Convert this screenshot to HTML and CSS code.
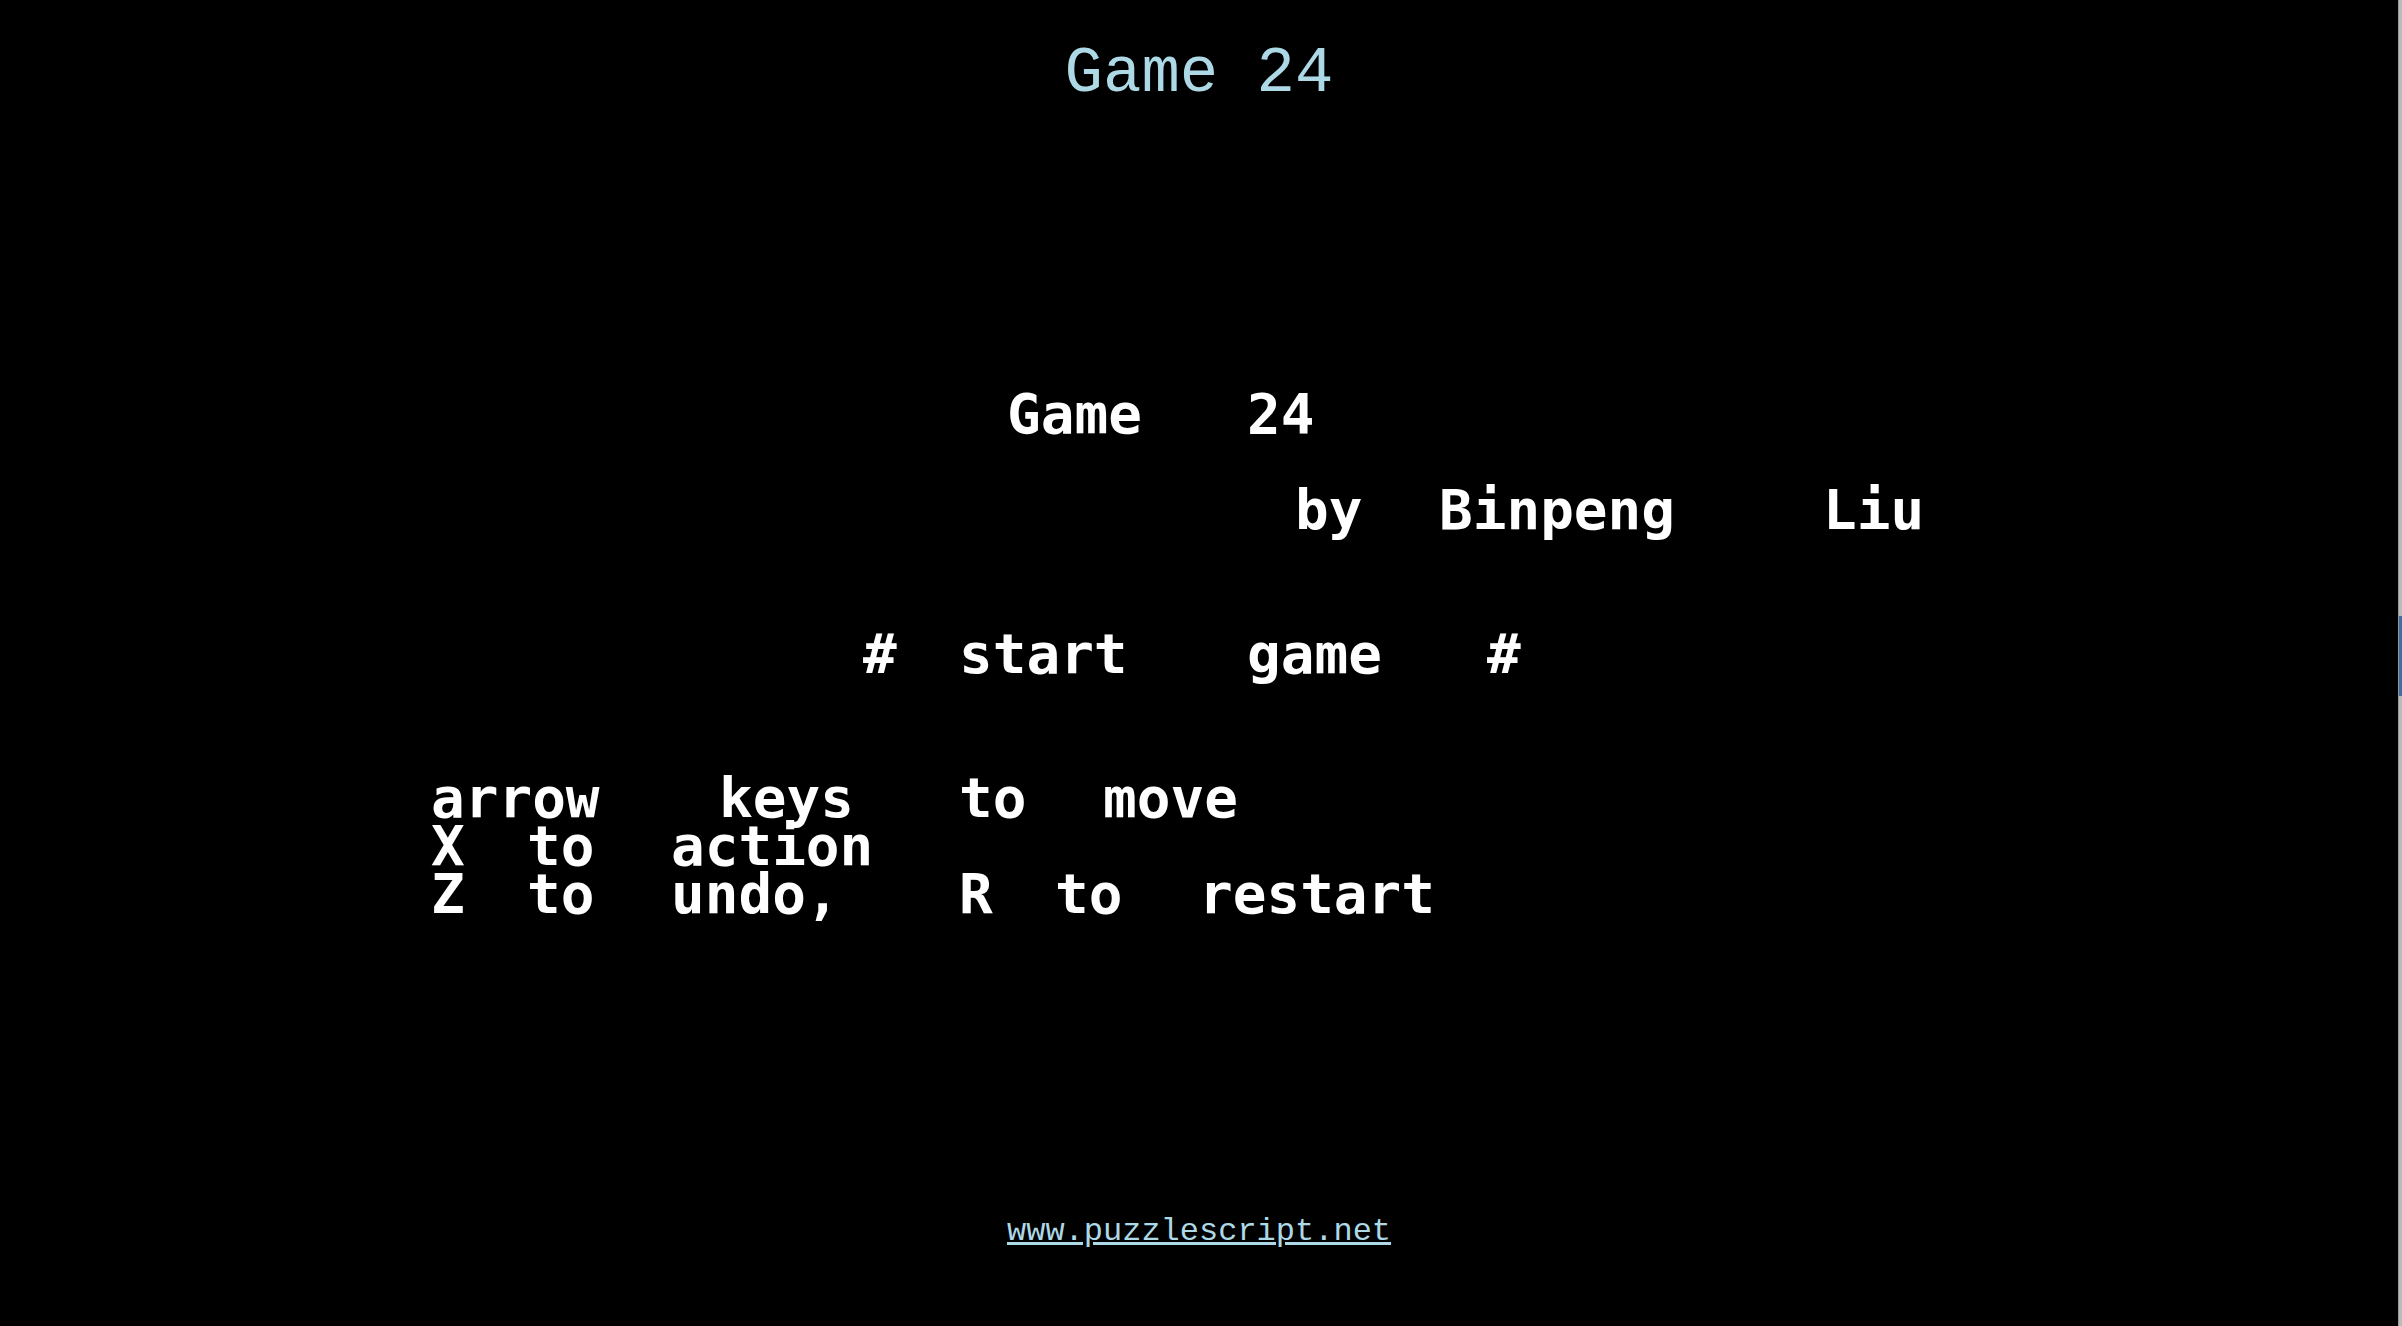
FILE: index.html
```html
<!DOCTYPE html>
<html lang="en">
<head>
<meta charset="utf-8">
<title>Game 24</title>
<link rel="stylesheet" href="styles.css">
</head>
<body>
<div class="page">
  <header class="header"><h1 class="title">Game 24</h1></header>
  <main class="screen">
    <div class="grid">
      <h2 class="line game-title"><span class="w4">Game</span> <span class="w2">24</span></h2>
      <p class="line author"><span class="w2">by</span> <span class="w7">Binpeng</span> <span class="w3">Liu</span></p>
      <button class="line start" type="button"><span class="w1">#</span> <span class="w5">start</span> <span class="w4">game</span> <span class="w1">#</span></button>
      <div class="keys">
        <p class="line"><span class="w5">arrow</span> <span class="w4">keys</span> <span class="w2">to</span> <span class="w4">move</span></p>
        <p class="line"><span class="w1">X</span> <span class="w2">to</span> <span class="w6">action</span></p>
        <p class="line"><span class="w1">Z</span> <span class="w2">to</span> <span class="w5">undo,</span> <span class="w1">R</span> <span class="w2">to</span> <span class="w7">restart</span></p>
      </div>
    </div>
  </main>
  <footer class="footer"><a class="link" href="https://www.puzzlescript.net">www.puzzlescript.net</a></footer>
</div>
<div class="edge"><div class="edge-thumb"></div></div>
</body>
</html>
```
FILE: styles.css
```css
* {
  box-sizing: border-box;
  margin: 0;
}

body {
  display: flex;
  min-height: 100vh;
  background: #000;
  font-family: "Liberation Mono", "Courier New", monospace;
}

.page {
  flex: 1;
  display: flex;
  flex-direction: column;
  align-items: center;
  color: lightblue;
}

.header {
  padding-top: 38px;
}

.title {
  font-size: 64px;
  font-weight: 400;
  line-height: 72px;
}

.screen {
  flex: 1;
  display: flex;
  align-items: center;
}

/* A text screen of 34 columns by 13 rows, 48px each way. */
.grid {
  display: flex;
  flex-direction: column;
  align-items: flex-start;
  width: 1632px;
  padding: 40px 48px 56px;
  color: #fff;
}

/* Words start on a column; one empty column lies between them. */
.line {
  display: flex;
  gap: 48px;
  padding: 0;
  border: 0;
  background: none;
  color: inherit;
  font-family: "DejaVu Sans Mono", monospace;
  font-size: 56px;
  font-weight: 700;
  line-height: 48px;
  text-align: left;
}

.w1 { width: 48px; }
.w2 { width: 96px; }
.w3 { width: 144px; }
.w4 { width: 192px; }
.w5 { width: 240px; }
.w6 { width: 288px; }
.w7 { width: 336px; }

.game-title {
  margin-left: 576px;
}

.author {
  margin: 48px 0 96px 864px;
}

.start {
  margin: 0 0 96px 432px;
  cursor: pointer;
}

.footer {
  padding-bottom: 76px;
}

.link {
  color: inherit;
  font-size: 32px;
  line-height: 36px;
}

.edge {
  width: 4px;
  padding-top: 616px;
  border-left: 1px solid #999;
  background: #bbb;
}

.edge-thumb {
  height: 80px;
  background: #3d6fa5;
}
```
